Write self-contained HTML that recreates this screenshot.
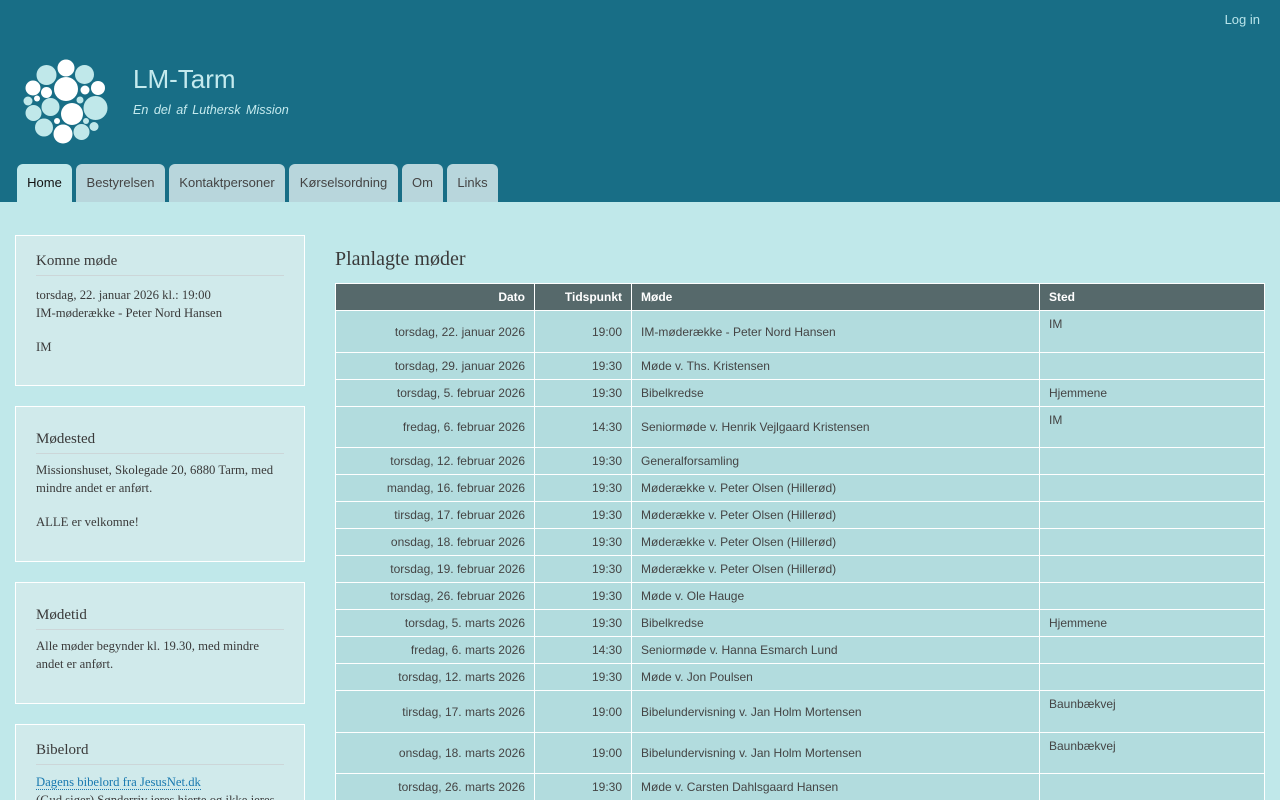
<!DOCTYPE html>
<html><head><meta charset="utf-8">
<style>
*{box-sizing:border-box;margin:0;padding:0}
html,body{width:1280px;height:800px;overflow:hidden}
body{background:#c0e8ea;font-family:"Liberation Sans",sans-serif;position:relative}
#hdr{position:absolute;left:0;top:0;width:1280px;height:202px;background:#186e86}
#login{position:absolute;right:20px;top:12px;font-size:13px;color:#b8e4ea}
#logo{position:absolute;left:0;top:0}
#title{position:absolute;left:133px;top:64px;font-size:26px;color:#c4eaee}
#slogan{position:absolute;left:133px;top:103px;font-size:12.6px;font-style:italic;color:#c4eaee;word-spacing:2px}
.tab{position:absolute;top:164px;height:38px;background:#b8d6dc;border-radius:6px 6px 0 0;font-size:13px;color:#444;text-align:center;line-height:37px}
.tab.act{background:#c0e8ea;color:#111}
.box{position:absolute;left:15px;width:290px;background:#d0eaeb;border:1px solid #fff;padding:15px 20px 0 20px;font-family:"Liberation Serif",serif;color:#3a3a3a}
.box h2{font-size:15px;font-weight:normal;line-height:20px;padding-bottom:4px;border-bottom:1px solid #ccd6d8}
.box p{font-size:12.7px;line-height:18px;margin-top:9px}
.box p+p{margin-top:16px}
.box a{color:#1a7ab0;text-decoration:none;border-bottom:1px dotted #1a7ab0}
#ph{position:absolute;left:335px;top:248px;font-family:"Liberation Serif",serif;font-size:20px;color:#3a3a3a;font-weight:normal}
table{position:absolute;left:335px;top:283px;width:930px;border-collapse:collapse;font-size:12px;color:#444}
td,th{border:1px solid #fff;padding:0 9px;background:#b2dcde}
th{background:#56696b;color:#fff;height:27px;font-weight:bold}
.r{text-align:right}.l{text-align:left}
td.t{vertical-align:top;padding-top:6px}
tr.n td{height:27px}
</style></head><body>
<div id="hdr">
<div id="login">Log in</div>
<svg id="logo" width="120" height="150">
<g fill="#fff">
<circle cx="66" cy="68" r="8.5"/><circle cx="33" cy="88" r="7.5"/><circle cx="66" cy="89" r="12"/><circle cx="46.5" cy="92.5" r="5.5"/><circle cx="85" cy="90" r="4.5"/><circle cx="98" cy="88" r="7"/><circle cx="37" cy="98.5" r="3"/><circle cx="72" cy="114" r="11"/><circle cx="57" cy="121" r="3"/><circle cx="63" cy="134" r="9.5"/>
</g>
<g fill="#c0e8ea">
<circle cx="46.5" cy="75" r="10"/><circle cx="84.5" cy="74.5" r="9.5"/><circle cx="28" cy="101" r="4.5"/><circle cx="50.5" cy="107" r="9"/><circle cx="80" cy="100" r="3.5"/><circle cx="95.5" cy="108" r="12"/><circle cx="33.5" cy="113" r="8"/><circle cx="86" cy="121" r="3"/><circle cx="44" cy="127.5" r="9"/><circle cx="81.5" cy="132" r="8"/><circle cx="94" cy="126.5" r="4.5"/>
</g></svg>
<div id="title">LM-Tarm</div>
<div id="slogan">En del af Luthersk Mission</div>
<div class="tab act" style="left:17px;width:55px">Home</div>
<div class="tab" style="left:76px;width:89px">Bestyrelsen</div>
<div class="tab" style="left:169px;width:116px">Kontaktpersoner</div>
<div class="tab" style="left:289px;width:109px">Kørselsordning</div>
<div class="tab" style="left:402px;width:41px">Om</div>
<div class="tab" style="left:447px;width:51px">Links</div>
</div>

<div class="box" style="top:235px;height:151px"><h2>Komne møde</h2><p style="margin-top:10px">torsdag, 22. januar 2026 kl.: 19:00<br>IM-møderække - Peter Nord Hansen</p><p>IM</p></div>
<div class="box" style="top:406px;height:156px;padding-top:22px"><h2>Mødested</h2><p style="margin-top:7px">Missionshuset, Skolegade 20, 6880 Tarm, med mindre andet er anført.</p><p>ALLE er velkomne!</p></div>
<div class="box" style="top:582px;height:122px;padding-top:22px"><h2>Mødetid</h2><p style="margin-top:7px">Alle møder begynder kl. 19.30, med mindre andet er anført.</p></div>
<div class="box" style="top:724px;height:120px;padding-top:15px"><h2>Bibelord</h2><p style="margin-top:8px"><a>Dagens bibelord fra JesusNet.dk</a><br>(Gud siger) Sønderriv jeres hjerte og ikke jeres klæder</p></div>

<h1 id="ph">Planlagte møder</h1>
<table>
<tr><th class="r" style="width:199px">Dato</th><th class="r" style="width:97px">Tidspunkt</th><th class="l" style="width:408px">Møde</th><th class="l">Sted</th></tr>
<tr style="height:42px"><td class="r">torsdag, 22. januar 2026</td><td class="r">19:00</td><td>IM-møderække - Peter Nord Hansen</td><td class="t">IM</td></tr>
<tr class="n"><td class="r">torsdag, 29. januar 2026</td><td class="r">19:30</td><td>Møde v. Ths. Kristensen</td><td></td></tr>
<tr class="n"><td class="r">torsdag, 5. februar 2026</td><td class="r">19:30</td><td>Bibelkredse</td><td>Hjemmene</td></tr>
<tr style="height:41px"><td class="r">fredag, 6. februar 2026</td><td class="r">14:30</td><td>Seniormøde v. Henrik Vejlgaard Kristensen</td><td class="t">IM</td></tr>
<tr class="n"><td class="r">torsdag, 12. februar 2026</td><td class="r">19:30</td><td>Generalforsamling</td><td></td></tr>
<tr class="n"><td class="r">mandag, 16. februar 2026</td><td class="r">19:30</td><td>Møderække v. Peter Olsen (Hillerød)</td><td></td></tr>
<tr class="n"><td class="r">tirsdag, 17. februar 2026</td><td class="r">19:30</td><td>Møderække v. Peter Olsen (Hillerød)</td><td></td></tr>
<tr class="n"><td class="r">onsdag, 18. februar 2026</td><td class="r">19:30</td><td>Møderække v. Peter Olsen (Hillerød)</td><td></td></tr>
<tr class="n"><td class="r">torsdag, 19. februar 2026</td><td class="r">19:30</td><td>Møderække v. Peter Olsen (Hillerød)</td><td></td></tr>
<tr class="n"><td class="r">torsdag, 26. februar 2026</td><td class="r">19:30</td><td>Møde v. Ole Hauge</td><td></td></tr>
<tr class="n"><td class="r">torsdag, 5. marts 2026</td><td class="r">19:30</td><td>Bibelkredse</td><td>Hjemmene</td></tr>
<tr class="n"><td class="r">fredag, 6. marts 2026</td><td class="r">14:30</td><td>Seniormøde v. Hanna Esmarch Lund</td><td></td></tr>
<tr class="n"><td class="r">torsdag, 12. marts 2026</td><td class="r">19:30</td><td>Møde v. Jon Poulsen</td><td></td></tr>
<tr style="height:42px"><td class="r">tirsdag, 17. marts 2026</td><td class="r">19:00</td><td>Bibelundervisning v. Jan Holm Mortensen</td><td class="t">Baunbækvej</td></tr>
<tr style="height:41px"><td class="r">onsdag, 18. marts 2026</td><td class="r">19:00</td><td>Bibelundervisning v. Jan Holm Mortensen</td><td class="t">Baunbækvej</td></tr>
<tr class="n"><td class="r">torsdag, 26. marts 2026</td><td class="r">19:30</td><td>Møde v. Carsten Dahlsgaard Hansen</td><td></td></tr>
</table>
</body></html>
